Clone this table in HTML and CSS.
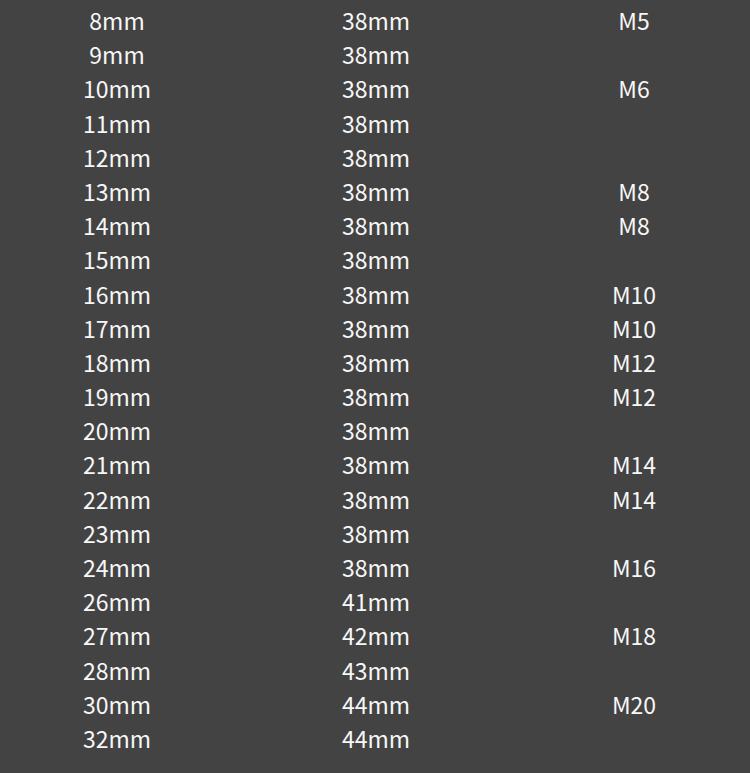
FILE: index.html
```html
<!DOCTYPE html>
<html>
<head>
<meta charset="utf-8">
<link rel="stylesheet" href="styles.css">
</head>
<body>
<div class="table">
<div class="row"><span>8mm</span><span>38mm</span><span>M5</span></div>
<div class="row"><span>9mm</span><span>38mm</span><span></span></div>
<div class="row"><span>10mm</span><span>38mm</span><span>M6</span></div>
<div class="row"><span>11mm</span><span>38mm</span><span></span></div>
<div class="row"><span>12mm</span><span>38mm</span><span></span></div>
<div class="row"><span>13mm</span><span>38mm</span><span>M8</span></div>
<div class="row"><span>14mm</span><span>38mm</span><span>M8</span></div>
<div class="row"><span>15mm</span><span>38mm</span><span></span></div>
<div class="row"><span>16mm</span><span>38mm</span><span>M10</span></div>
<div class="row"><span>17mm</span><span>38mm</span><span>M10</span></div>
<div class="row"><span>18mm</span><span>38mm</span><span>M12</span></div>
<div class="row"><span>19mm</span><span>38mm</span><span>M12</span></div>
<div class="row"><span>20mm</span><span>38mm</span><span></span></div>
<div class="row"><span>21mm</span><span>38mm</span><span>M14</span></div>
<div class="row"><span>22mm</span><span>38mm</span><span>M14</span></div>
<div class="row"><span>23mm</span><span>38mm</span><span></span></div>
<div class="row"><span>24mm</span><span>38mm</span><span>M16</span></div>
<div class="row"><span>26mm</span><span>41mm</span><span></span></div>
<div class="row"><span>27mm</span><span>42mm</span><span>M18</span></div>
<div class="row"><span>28mm</span><span>43mm</span><span></span></div>
<div class="row"><span>30mm</span><span>44mm</span><span>M20</span></div>
<div class="row"><span>32mm</span><span>44mm</span><span></span></div>
</div>
</body>
</html>
```
FILE: styles.css
```css
html, body {
  margin: 0;
  padding: 0;
  background: #434343;
}
body {
  width: 750px;
  height: 773px;
  overflow: hidden;
  font-family: "Noto Sans CJK SC", "Noto Sans", sans-serif;
  color: #f7f7f7;
  font-size: 23px;
}
.table {
  padding-top: 3px;
}
.row {
  display: grid;
  grid-template-columns: 234px 284px 232px;
  height: 34.2px;
  line-height: 34.2px;
}
.row span {
  text-align: center;
  white-space: nowrap;
}
```
